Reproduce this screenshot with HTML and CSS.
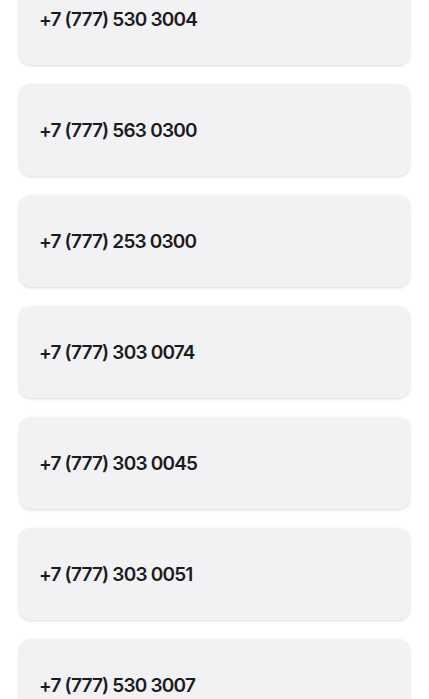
FILE: index.html
```html
<!DOCTYPE html>
<html lang="ru">
<head>
    <meta charset="UTF-8">
    <meta name="viewport" content="width=device-width, initial-scale=1.0">
    <title>Номера</title>
    <link rel="stylesheet" href="styles.css">
</head>
<body>
    <div class="list">
        <div class="card">+7 (777) 530 3004</div>
        <div class="card">+7 (777) 563 0300</div>
        <div class="card">+7 (777) 253 0300</div>
        <div class="card">+7 (777) 303 0074</div>
        <div class="card">+7 (777) 303 0045</div>
        <div class="card">+7 (777) 303 0051</div>
        <div class="card">+7 (777) 530 3007</div>
    </div>
</body>
</html>
```

FILE: styles.css
```css
body {
    margin: 0;
    background-color: #ffffff;
    font-family: Inter, "Noto Sans", sans-serif;
    overflow: hidden;
}
.list {
    display: flex;
    flex-direction: column;
    gap: 19px;
    padding: 0 19px;
    margin-top: -27px;
}
.card {
    height: 92px;
    display: flex;
    align-items: center;
    padding: 0 20px;
    background-color: #f2f2f5;
    border-radius: 12px;
    box-shadow: 0 1px 3px rgba(0, 0, 0, 0.14);
    color: #1c1c1e;
    font-size: 19px;
    font-weight: 600;
    letter-spacing: -0.8px;
}
```
